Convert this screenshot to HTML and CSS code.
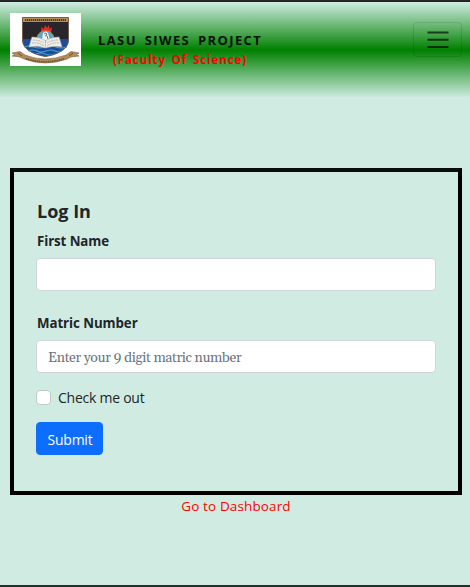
FILE: index.html
```html
<!DOCTYPE html>
<html lang="en">
<head>
<meta charset="utf-8">
<title>LASU SIWES Project</title>
<link rel="stylesheet" href="styles.css">
</head>
<body>
<header class="navbar">
  <svg class="logo" viewBox="0 0 71 53" aria-hidden="true">
    <rect width="71" height="53" fill="#fff"/>
    <path d="M12.5 4.5H58.5V27C58.5 36 48 41.500 35.500 43.500C23 41.500 12.500 36 12.500 27Z" fill="#28262b"/>
    <path d="M12.500 26H58.500V28C58 36 48 41.500 35.500 43.500C23 41.500 13 36 12.500 28Z" fill="#1d4a9e"/>
    <path d="M14 34q5-2 10 0t11 0 11 0 11 0M18 38q5-2 9 0t9 0 9 0 8-1M26 41q5-2 9 0t10 0" fill="none" stroke="#42a7c4" stroke-width="1.100"/>
    <path d="M12.500 4.500H58.500V27C58.500 36 48 41.500 35.500 43.500C23 41.500 12.500 36 12.500 27Z" fill="none" stroke="#74604c"/>
    <path d="M13 5H58V9H13Z" fill="#b58d57"/>
    <path d="M15 7H56" stroke="#4d3c2b" stroke-width="1.800" stroke-dasharray="1.300 .7"/>
    <path d="M31 19L31.500 14L34 16L35 12L37 15L39 12L39.500 16L42 14L41 20Z" fill="#e52d25"/>
    <path d="M27 27C26 15 45 15 44 27Z" fill="#4ea9d3" stroke="#bd8b4c"/>
    <path d="M32 27L33 20Q36 17 38 20L40 27Z" fill="#f4f3e9"/>
    <path d="M34 21l2-1 1 2-2 1M37 23l1 3" fill="none" stroke="#30383b" stroke-width=".7"/>
    <path d="M22 24Q29 24 35.500 27.500Q42 24 49 24L52 34Q43 32 35.500 35Q28 32 19 34Z" fill="#eeeee7" stroke="#b9b9b4" stroke-width=".6"/>
    <path d="M23 27q6 0 11 3M22 30q6-1 12 3M48 27q-6 0-11 3M49 30q-6-1-12 3M35.500 28v6" fill="none" stroke="#a5aaa6" stroke-width=".8" stroke-dasharray="2 .6"/>
    <path d="M2 40L10 38.500L15 42Q35 50 56 42L61 38.500L69 40L66 42L69 43L61 44L57 46Q35 54 14 46L10 44L2 43L5 42Z" fill="#b28b56" stroke="#78603f" stroke-width=".6"/>
    <path d="M16 45.500Q35 52 55 45.500" fill="none" stroke="#65503b" stroke-width="1.600" stroke-dasharray="1.400 .8"/>
    <path d="M8 40l4 3M63 40l-4 3" stroke="#66503a"/>
  </svg>
  <div class="brand">
    <div class="brand-title">LASU SIWES PROJECT</div>
    <div class="brand-sub">(Faculty Of Science)</div>
  </div>
  <button class="toggler" type="button" aria-label="Menu">
    <svg viewBox="0 0 22 20"><path d="M.5 2.500H21.500M.5 9.700H21.500M.5 16.900H21.500"/></svg>
  </button>
</header>
<main>
  <form class="card">
    <h1><span>Log In</span></h1>
    <label class="label first" for="name"><span>First Name</span></label>
    <input class="field" id="name" type="text">
    <label class="label second" for="matric"><span>Matric Number</span></label>
    <input class="field" id="matric" type="text" placeholder="Enter your 9 digit matric number">
    <label class="check"><input type="checkbox"><span>Check me out</span></label>
    <button class="submit" type="button">Submit</button>
  </form>
  <a class="dashboard">Go to Dashboard</a>
</main>
</body>
</html>
```
FILE: styles.css
```css
* { box-sizing: border-box; }
body {
  margin: 0;
  height: 587px;
  overflow: hidden;
  border-top: 2px solid #242424;
  border-bottom: 2px solid #28302d;
  background: #d0ece2;
  color: #212529;
  font-family: "Open Sans", "Noto Sans", sans-serif;
  font-size: 14px;
}
.navbar {
  display: flex;
  align-items: flex-start;
  height: 96px;
  padding: 11px 8px 0 10px;
  background: linear-gradient(#d0ece2, #008000 50%, #d0ece2);
}
.logo { width: 71px; height: 53px; flex: none; }
.brand { padding: 17px 0 0 17px; white-space: nowrap; }
.brand-title {
  color: #07130c;
  font-size: 13px;
  font-weight: 700;
  line-height: 20px;
  letter-spacing: 1.400px;
  word-spacing: 3px;
}
.brand-sub {
  padding-left: 15px;
  color: #f00;
  font-size: 11.500px;
  font-weight: 700;
  line-height: 19px;
  letter-spacing: .9px;
  word-spacing: 2px;
}
.toggler {
  display: flex;
  align-items: center;
  justify-content: center;
  width: 49px;
  height: 35px;
  margin: 9px 0 0 auto;
  padding: 0;
  border: 1px solid rgba(0, 0, 0, .1);
  border-radius: 4px;
  background: none;
}
.toggler svg { width: 22px; height: 20px; }
.toggler path { fill: none; stroke: rgba(0, 0, 0, .65); stroke-width: 2; }
main { display: flex; flex-direction: column; align-items: center; }
.card {
  display: flex;
  flex-direction: column;
  align-items: flex-start;
  width: 452px;
  height: 327px;
  margin: 70px 0 0 2px;
  padding: 26px 22px 0;
  border: 4px solid #000;
  border-top-color: #0a0d0c;
}
h1 { margin: 0; padding-left: 1px; font-size: 18px; font-weight: 700; line-height: 26px; }
.label { padding-left: 1px; font-size: 13.300px; font-weight: 700; line-height: 20px; }
.first { margin-top: 7px; letter-spacing: -.1px; }
.second { margin-top: 22px; letter-spacing: -.08px; }
.field {
  width: 400px;
  height: 33px;
  margin-top: 7px;
  padding: 2px 11px 0;
  border: 1px solid #ced4da;
  border-radius: 4px;
  background: #fff;
  color: #212529;
  font-family: Gelasio, Georgia, "Noto Serif", "DejaVu Serif Condensed", "Liberation Serif", serif;
  font-size: 14px;
  letter-spacing: -.38px;
}
.field::placeholder { color: #6c757d; opacity: 1; }
.check {
  display: flex;
  align-items: center;
  height: 20px;
  margin-top: 14px;
  gap: 7px;
  letter-spacing: -.25px;
}
.check input {
  appearance: none;
  width: 15px;
  height: 15px;
  margin: 0;
  border: 1px solid #bfc9c5;
  border-radius: 4px;
  background: #fff;
}
.submit {
  width: 67px;
  height: 33px;
  margin-top: 15px;
  padding: 2px 0 0 1px;
  border: 1px solid #0d6efd;
  border-radius: 4px;
  background: #0d6efd;
  color: #fff;
  font: 14px "Open Sans", sans-serif;
  letter-spacing: -.25px;
}
.dashboard { color: #f00; font-size: 13.500px; line-height: 20px; margin: 1px 0 0 2px; letter-spacing: .13px; }
```
